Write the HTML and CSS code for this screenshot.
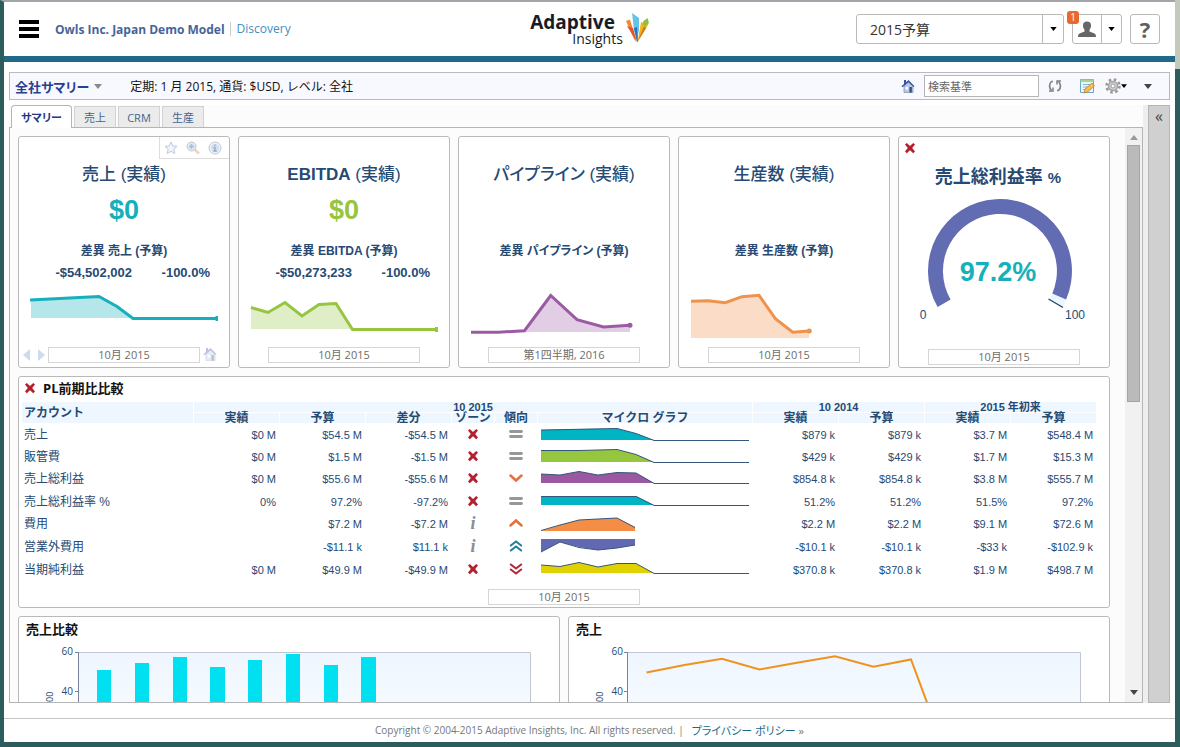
FILE: index.html
```html
<!DOCTYPE html>
<html lang="ja">
<head>
<meta charset="utf-8">
<title>全社サマリー - Adaptive Insights</title>
<link rel="stylesheet" href="styles.css">
</head>
<body>
<svg class="defs" aria-hidden="true">
  <symbol id="cross" viewBox="0 0 12 12"><path d="M1 2.500 2.800 1 6 3.900 9.200 1 11 2.500 8.200 6 11 9.500 9.200 11.200 6 8.200 2.800 11.200 1 9.500 3.800 6z" fill="#b3202f"/></symbol>
  <symbol id="equal" viewBox="0 0 14 12"><path d="M1.500 3.500h11M1.500 8.500h11" stroke="#979797" stroke-width="2.800" stroke-linecap="round"/></symbol>
  <symbol id="down" viewBox="0 0 14 12"><path d="M1.500 3.500 7 8.500 12.500 3.500" fill="none" stroke="#e4703a" stroke-width="2.500" stroke-linecap="round"/></symbol>
  <symbol id="up" viewBox="0 0 14 12"><path d="M1.500 8.500 7 3.500 12.500 8.500" fill="none" stroke="#e4703a" stroke-width="2.500" stroke-linecap="round"/></symbol>
  <symbol id="up2" viewBox="0 0 14 12"><path d="M1.800 5.500 7 1.500 12.200 5.500M1.800 10.500 7 6.500 12.200 10.500" fill="none" stroke="#23809a" stroke-width="2.100" stroke-linecap="round"/></symbol>
  <symbol id="down2" viewBox="0 0 14 12"><path d="M1.800 1.500 7 5.500 12.200 1.500M1.800 6.500 7 10.500 12.200 6.500" fill="none" stroke="#b3283a" stroke-width="2.100" stroke-linecap="round"/></symbol>
  <symbol id="caret" viewBox="0 0 8 5"><path d="M0 0h8L4 5z" fill="currentColor"/></symbol>
  <symbol id="home" viewBox="0 0 14 14"><path d="M3 7v6.500h9V7L7.500 3z" fill="#b9cae0" stroke="#7d8fae" stroke-width=".7"/><path d="M3 1h2v4H3z" fill="#3d55a5"/><path d="M.5 7.300 7.500 1l6 6.300-1 .7-5-4.800L1.500 8.300z" fill="#3c52a3"/><path d="M8.500 8h2.300v5.500H8.500z" fill="#35477f"/><path d="M4.500 8h2.500v2.500H4.500z" fill="#fff"/></symbol>
</svg>
<div class="window">
  <header class="header">
    <button class="menu" aria-label="メニュー"><span></span><span></span><span></span></button>
    <div class="model"><strong>Owls Inc. Japan Demo Model</strong><a href="#">Discovery</a></div>
    <div class="logo">
      <div class="wordmark"><b>Adaptive</b><span>Insights</span></div>
      <svg width="24" height="32" viewBox="0 0 24 32">
        <path d="M1 9 5 7.500 7 14l4 16-2-3z" fill="#ef8a2f"/><path d="M2 14 8 16l4 14z" fill="#e5532c"/><path d="M7 1l7 5v12l-2 10-3-10z" fill="#62c4e8"/><path d="M9 16l3-1 1 15h-1z" fill="#2a72b8"/><path d="M16 10l3 1 4-4v6L12.500 30z" fill="#f0b71f"/><path d="M18 9.500 22.500 6l1.500 5-5 4z" fill="#8fbf3c"/><path d="M18.500 15l3 .5L12.500 30z" fill="#d6781f"/>
      </svg>
    </div>
    <div class="actions">
      <div class="version"><select aria-label="バージョン"><option>2015予算</option></select><span class="arrow"><svg width="7" height="4"><use href="#caret"/></svg></span></div>
      <div class="user">
        <button aria-label="ユーザー"><svg width="18" height="17" viewBox="0 0 18 17"><path d="M5 4.500C5 1.500 6.500 .5 9 .5s4 1 4 4c0 2-.8 3.500-1.500 4.300v1.700l5 2c1 .5 1.500 1.500 1.500 3.500H0c0-2 .5-3 1.500-3.500l5-2V8.800C5.800 8 5 6.500 5 4.500z" fill="#666"/></svg></button>
        <button aria-label="ユーザー メニュー"><svg width="7" height="4"><use href="#caret"/></svg></button>
        <span class="badge">1</span>
      </div>
      <button class="help" aria-label="ヘルプ">?</button>
    </div>
  </header>

  <main class="main">
    <div class="toolbar">
      <button class="page-title">全社サマリー<svg width="8" height="5"><use href="#caret"/></svg></button>
      <span class="context">定期: 1 月 2015, 通貨: $USD, レベル: 全社</span>
      <div class="tools">
        <button aria-label="ホーム"><svg width="14" height="14"><use href="#home"/></svg></button>
        <input class="search" type="text" aria-label="検索基準" placeholder="検索基準">
        <button class="t-refresh" aria-label="更新"><svg width="14" height="14" viewBox="0 0 14 14" fill="none" stroke="#808080" stroke-width="1.700"><path d="M5 2.500H3.500C.8 5 1 9 3.500 11.500M9 11.500h1.500C13.200 9 13 5 10.500 2.500"/><path d="M1 12h4V8.500M13 2H9v3.500" stroke-width="1.500"/></svg></button>
        <button class="t-note" aria-label="編集"><svg width="16" height="16" viewBox="0 0 16 16"><path d="M1.500 1.500h13v13h-13z" fill="#eaf5fb" stroke="#6ea5c8"/><path d="M1.500 1.500h13V4h-13z" fill="#a5d58c"/><path d="M4 6.500h8M4 9h7M4 11.500h4" stroke="#8fb3c9"/><path d="M5 15l1-4 7-6 2.500 3-7 6z" fill="#f2c14b" stroke="#b98532" stroke-width=".8"/></svg></button>
        <button class="t-gear" aria-label="設定"><svg width="16" height="16" viewBox="0 0 16 16"><circle cx="8" cy="8" r="6.500" fill="none" stroke="#999" stroke-width="2.500" stroke-dasharray="2.550 2.550"/><circle cx="8" cy="8" r="4.500" fill="#d2d2d2" stroke="#a2a2a2" stroke-width="1.500"/><circle cx="8" cy="8" r="2" fill="#fff" stroke="#999"/></svg><svg width="6" height="4"><use href="#caret"/></svg></button>
        <button class="t-more" aria-label="その他"><svg width="8" height="5"><use href="#caret"/></svg></button>
      </div>
    </div>

    <div class="workspace">
      <div class="board">
        <nav class="tabs">
          <button class="tab active">サマリー</button><button class="tab">売上</button><button class="tab">CRM</button><button class="tab">生産</button>
        </nav>
        <div class="panel">
          <div class="content">
            <section class="kpis">
              <article class="card kpi">
                <div class="card-tools">
                  <svg width="14" height="14" viewBox="0 0 14 14"><path d="M7 1l1.800 4 4.200.4-3.200 2.800 1 4.300L7 10.300 3.200 12.500l1-4.300L1 5.400 5.200 5z" fill="#f2f5fa" stroke="#bccadd"/></svg>
                  <svg width="14" height="14" viewBox="0 0 14 14"><path d="M8 8l5 4.500" stroke="#eed6b4" stroke-width="2.500"/><circle cx="5.500" cy="5.500" r="4.500" fill="#dfe8f3" stroke="#bccadd"/><path d="M3 5.500h5M5.500 3v5" stroke="#a8bcd6" stroke-width="1.500"/></svg>
                  <svg width="14" height="14" viewBox="0 0 14 14"><circle cx="7" cy="7" r="6" fill="#eef2f8" stroke="#bccadd"/><circle cx="7" cy="7" r="4" fill="#d5e0ee"/><path d="M7 3.500v1.500M5.500 6.500H7V10M5.300 10h3.500" stroke="#93abcb" stroke-width="1.300" fill="none"/></svg>
                </div>
                <h2>売上 (実績)</h2>
                <p class="value teal">$0</p>
                <h3>差異 売上 (予算)</h3>
                <p class="delta"><span>-$54,502,002</span><span>-100.0%</span></p>
                <svg class="spark" viewBox="0 0 188 50"><path d="M1 10 69 7 87 17 103 28H1z" fill="#b5e6ea"/><path d="M0 10 69 6.500 87 16.500 103 28.500H187M187 26v5" fill="none" stroke="#16b0bc" stroke-width="3"/></svg>
                <div class="period"><span class="nav-prev"><svg width="7" height="12" viewBox="0 0 7 12"><path d="M7 0v12L0 6z" fill="#c8d8ee"/></svg><svg width="7" height="12" viewBox="0 0 7 12"><path d="M0 0v12l7-6z" fill="#c8d8ee"/></svg></span><span class="date">10月 2015</span><span class="nav-home"><svg width="14" height="14"><use href="#home"/></svg></span></div>
              </article>
              <article class="card kpi">
                <h2><b>EBITDA</b> (実績)</h2>
                <p class="value green">$0</p>
                <h3>差異 EBITDA (予算)</h3>
                <p class="delta"><span>-$50,273,233</span><span>-100.0%</span></p>
                <svg class="spark" viewBox="0 0 188 50"><path d="M1 18 18 23 35 12 52 26 69 14 86 13 103 39H1z" fill="#dfeec6"/><path d="M1 17.500 18 22.500 35 12.500 52 26 69 14.500 86 13.500 102.500 39.500H186M186.500 37v5" fill="none" stroke="#96c540" stroke-width="3"/></svg>
                <div class="period"><span class="date">10月 2015</span></div>
              </article>
              <article class="card kpi">
                <h2>パイプライン (実績)</h2>
                <p class="value"></p>
                <h3>差異 パイプライン (予算)</h3>
                <p class="delta"></p>
                <svg class="spark" viewBox="0 0 188 50"><path d="M1 42H160V35L134 37 107 30 81 5 55 41z" fill="#e2cee4"/><path d="M1 42.300H28L54.500 40.700 80.700 5.500 107 29.700 133.500 37 160 35.300" fill="none" stroke="#9b5ba3" stroke-width="3"/><circle cx="160" cy="35.300" r="2.500" fill="#9b5ba3"/></svg>
                <div class="period"><span class="date">第1四半期, 2016</span></div>
              </article>
              <article class="card kpi">
                <h2>生産数 (実績)</h2>
                <p class="value"></p>
                <h3>差異 生産数 (予算)</h3>
                <p class="delta"></p>
                <svg class="spark" viewBox="0 0 188 50"><path d="M1 48V11L18 11 35 13 52 7 69 5 86 29 103 42 119 41V48z" fill="#fbdcc6"/><path d="M1 11.300 18.300 10.700 35.300 12.700 52 6.700 69 5.300 85.700 29 102.700 42.300 119.300 41" fill="none" stroke="#ee934f" stroke-width="3"/><circle cx="119.300" cy="41" r="2.500" fill="#ee934f"/></svg>
                <div class="period"><span class="date">10月 2015</span></div>
              </article>
              <article class="card kpi gauge">
                <svg class="alert" width="12" height="12"><use href="#cross"/></svg>
                <h2>売上総利益率 <small>%</small></h2>
                <svg class="dial" viewBox="0 0 192 150">
                  <path d="M158.100 106.500A72 72 0 0 1 154.400 114L141.400 106.500A57 57 0 0 0 144.300 100.500z" fill="#ebf5ff"/>
                  <path d="M29.600 114A72 72 0 1 1 158.100 106.500L144.300 100.500A57 57 0 1 0 42.600 106.500z" fill="#616cb3"/>
                  <path d="M140.500 106 155 114.500" stroke="#1f4068" stroke-width="1.300"/>
                  <text class="dial-value" x="90" y="88">97.2%</text>
                  <text class="dial-end" x="15" y="126">0</text><text class="dial-end" x="167" y="126">100</text>
                </svg>
                <div class="period"><span class="date">10月 2015</span></div>
              </article>
            </section>

            <section class="card pl">
              <h4><svg width="12" height="12"><use href="#cross"/></svg>PL前期比比較</h4>
              <table>
                <colgroup><col class="c-account"><col class="c-num"><col class="c-num"><col class="c-num"><col class="c-icon"><col class="c-icon"><col class="c-graph"><col class="c-num"><col class="c-num"><col class="c-num"><col class="c-num"></colgroup>
                <thead>
                  <tr><th rowspan="2" class="account">アカウント</th><th colspan="6">10 2015</th><th colspan="2">10 2014</th><th colspan="2">2015 年初来</th></tr>
                  <tr><th>実績</th><th>予算</th><th>差分</th><th>ゾーン</th><th>傾向</th><th>マイクロ グラフ</th><th>実績</th><th>予算</th><th>実績</th><th>予算</th></tr>
                </thead>
                <tbody>
                  <tr><th>売上</th><td>$0 M</td><td>$54.5 M</td><td>-$54.5 M</td><td class="ic"><svg width="12" height="12"><use href="#cross"/></svg></td><td class="ic"><svg width="14" height="12"><use href="#equal"/></svg></td><td class="graph"><svg viewBox="0 0 208 20" preserveAspectRatio="none"><path d="M0 5 38 4 76 3.500 95 8.500 113 15H0z" fill="#00b5c3"/><path class="trace" d="M0 5 38 4.300 76 3.500 95 8.500 113 15.500H208"/></svg></td><td>$879 k</td><td>$879 k</td><td>$3.7 M</td><td>$548.4 M</td></tr>
                  <tr><th>販管費</th><td>$0 M</td><td>$1.5 M</td><td>-$1.5 M</td><td class="ic"><svg width="12" height="12"><use href="#cross"/></svg></td><td class="ic"><svg width="14" height="12"><use href="#equal"/></svg></td><td class="graph"><svg viewBox="0 0 208 20" preserveAspectRatio="none"><path d="M0 3.500H38L76 2.500 95 7.500 113 15H0z" fill="#95c63d"/><path class="trace" d="M0 3.500H38L76 2.500 95 7.500 113 15.500H208"/></svg></td><td>$429 k</td><td>$429 k</td><td>$1.7 M</td><td>$15.3 M</td></tr>
                  <tr><th>売上総利益</th><td>$0 M</td><td>$55.6 M</td><td>-$55.6 M</td><td class="ic"><svg width="12" height="12"><use href="#cross"/></svg></td><td class="ic"><svg width="14" height="12"><use href="#down"/></svg></td><td class="graph"><svg viewBox="0 0 208 20" preserveAspectRatio="none"><path d="M0 5 19 6 38 2.500 57 6 76 3.500 95 4 113 14H0z" fill="#9a57a2"/><path class="trace" d="M0 5 19 6 38 2.500 57 6 76 3.500 95 4 113 14.500H208"/></svg></td><td>$854.8 k</td><td>$854.8 k</td><td>$3.8 M</td><td>$555.7 M</td></tr>
                  <tr><th>売上総利益率 %</th><td>0%</td><td>97.2%</td><td>-97.2%</td><td class="ic"><svg width="12" height="12"><use href="#cross"/></svg></td><td class="ic"><svg width="14" height="12"><use href="#equal"/></svg></td><td class="graph"><svg viewBox="0 0 208 20" preserveAspectRatio="none"><path d="M0 4H95L113 13H0z" fill="#00b5c3"/><path class="trace" d="M0 4.500H95L113 13.500H208"/></svg></td><td>51.2%</td><td>51.2%</td><td>51.5%</td><td>97.2%</td></tr>
                  <tr><th>費用</th><td></td><td>$7.2 M</td><td>-$7.2 M</td><td class="ic"><i>i</i></td><td class="ic"><svg width="14" height="12"><use href="#up"/></svg></td><td class="graph"><svg viewBox="0 0 208 20" preserveAspectRatio="none"><path d="M0 17 19 11 38 6 76 4 94 13V17z" fill="#f48e47"/><path class="trace" d="M0 16.500 19 11 38 6 76 4 94 13.500"/></svg></td><td>$2.2 M</td><td>$2.2 M</td><td>$9.1 M</td><td>$72.6 M</td></tr>
                  <tr><th>営業外費用</th><td></td><td>-$11.1 k</td><td>$11.1 k</td><td class="ic"><i>i</i></td><td class="ic"><svg width="14" height="12"><use href="#up2"/></svg></td><td class="graph"><svg viewBox="0 0 208 20" preserveAspectRatio="none"><path d="M0 2H94V8L76 11 57 13 38 10 19 5 0 15z" fill="#6069b2"/><path class="trace" d="M0 15 19 5 38 10.500 57 13 76 11 94 8"/></svg></td><td>-$10.1 k</td><td>-$10.1 k</td><td>-$33 k</td><td>-$102.9 k</td></tr>
                  <tr><th>当期純利益</th><td>$0 M</td><td>$49.9 M</td><td>-$49.9 M</td><td class="ic"><svg width="12" height="12"><use href="#cross"/></svg></td><td class="ic"><svg width="14" height="12"><use href="#down2"/></svg></td><td class="graph"><svg viewBox="0 0 208 20" preserveAspectRatio="none"><path d="M0 5 19 6.500 38 2.500 57 7 76 3.500H95L113 13H0z" fill="#dfd200"/><path class="trace" d="M0 5 19 6.500 38 2.500 57 7 76 3.500H95L113 13.500H208"/></svg></td><td>$370.8 k</td><td>$370.8 k</td><td>$1.9 M</td><td>$498.7 M</td></tr>
                </tbody>
              </table>
              <div class="period"><span class="date">10月 2015</span></div>
            </section>

            <section class="charts">
              <article class="card chart">
                <h4>売上比較</h4>
                <svg viewBox="0 0 540 200">
                  <defs><linearGradient id="sky" x1="0" y1="0" x2="0" y2="1"><stop offset="0" stop-color="#eff6ff"/><stop offset=".5" stop-color="#fafdff"/></linearGradient></defs>
                  <path d="M59.500 12.500h452V200h-452z" fill="url(#sky)" stroke="#c1c7d1"/>
                  <path d="M59.500 200V12.500M56 12.500h4M56 51.500h4" stroke="#76839a" fill="none"/>
                  <path d="M78 30h14v170H78zM116 23h14v177h-14zM154 17h14v183h-14zM191 27h15v173h-15zM229 20h14v180h-14zM267 14h14v186h-14zM305 25h14v175h-14zM342 17h15v183h-15z" fill="#00e0f0"/>
                  <text class="axis" x="54" y="15">60</text><text class="axis" x="54" y="55">40</text>
                  <text class="unit" transform="translate(34 62) rotate(-90)">00</text>
                </svg>
              </article>
              <article class="card chart">
                <h4>売上</h4>
                <svg viewBox="0 0 540 200">
                  <path d="M58.500 12.500h453V200h-453z" fill="url(#sky)" stroke="#c1c7d1"/>
                  <path d="M58.500 200V12.500M55 12.500h4M55 51.500h4" stroke="#76839a" fill="none"/>
                  <path d="M77.500 32.500 115.500 25 153 18.700 190.500 29.500 228 22.700 266 16.200 304.500 26.700 342 19.500 358 62.500 376 112" fill="none" stroke="#f0921e" stroke-width="2"/>
                  <text class="axis" x="54" y="15">60</text><text class="axis" x="54" y="55">40</text>
                  <text class="unit" transform="translate(34 62) rotate(-90)">00</text>
                </svg>
              </article>
            </section>
          </div>
          <div class="scrollbar"><svg class="sc-up" width="8" height="5" viewBox="0 0 8 5"><path d="M0 5h8L4 0z" fill="#999"/></svg><div class="thumb"></div><svg class="sc-down" width="8" height="5"><use href="#caret"/></svg></div>
        </div>
      </div>
      <aside class="drawer"><button aria-label="展開">«</button></aside>
    </div>
  </main>
  <footer class="footer"><span>Copyright © 2004-2015 Adaptive Insights, Inc. All rights reserved. |</span><a href="#">プライバシー ポリシー <span class="raquo">»</span></a></footer>
</div>
</body>
</html>
```
FILE: styles.css
```css
* { box-sizing: border-box; }

body {
  margin: 0;
  font-family: "Open Sans", "Noto Sans CJK JP", sans-serif;
  font-feature-settings: "palt";
  color: #264a73;
  background: linear-gradient(#c3cabc 69px, #2d5c5c 69px);
}
h2, h3, h4, p { margin: 0; }
a { text-decoration: none; }
button {
  font: inherit;
  color: inherit;
  background: none;
  border: 0;
  padding: 0;
  display: flex;
  align-items: center;
  justify-content: center;
}
svg { display: block; }
.defs { position: absolute; width: 0; height: 0; }

.window {
  display: flex;
  flex-direction: column;
  height: 100vh;
  border: solid #2d5c5c;
  border-width: 2px 0 5px 4px;
  border-top-color: #a2a6ab;
  margin-right: 5px;
  background: #fff;
}

/* Header */
.header {
  flex: none;
  display: grid;
  grid-template-columns: 1fr auto 1fr;
  align-items: center;
  height: 60px;
  border-bottom: 6px solid #1f6a8a;
  padding: 0 15px;
}
.model { grid-area: 1 / 1; }
.menu { grid-area: 1 / 1; justify-self: start; flex-direction: column; gap: 3px; }
.menu span { width: 20px; height: 4px; background: #000; }
.model { display: flex; align-items: center; font-size: 12px; margin-left: 36px; color: #45659a; white-space: nowrap; }
.model a { color: #4390c0; border-left: 1px solid #ccc; padding-left: 6px; margin-left: 5px; line-height: 14px; }
.logo { grid-area: 1 / 2; display: flex; gap: 2px; color: #161d27; }
.wordmark { display: flex; flex-direction: column; align-items: flex-end; }
.wordmark b { font-size: 19px; line-height: 20px; padding-right: 8px; }
.wordmark span { font-size: 14px; line-height: 14px; }
.actions { grid-area: 1 / 3; display: flex; justify-content: flex-end; gap: 8px; }
.version, .user, .help { height: 30px; border: 1px solid #b9b9b9; border-radius: 3px; background: #fff; }
.version { display: flex; position: relative; width: 208px; }
.version select {
  appearance: none;
  width: 100%;
  border: 0;
  background: none;
  padding: 0 30px 0 13px;
  font: 14px "Open Sans", "Noto Sans CJK JP", sans-serif;
  color: #333;
}
.arrow {
  position: absolute;
  right: 0;
  top: 0;
  bottom: 0;
  width: 21px;
  border-left: 1px solid #b9b9b9;
  display: flex;
  align-items: center;
  justify-content: center;
  color: #000;
  pointer-events: none;
}
.user { display: flex; position: relative; color: #000; }
.user button { width: 28px; }
.user button + button { width: 20px; border-left: 1px solid #b9b9b9; }
.badge {
  position: absolute;
  left: -6px;
  top: -4px;
  width: 12px;
  height: 13px;
  border-radius: 3px;
  background: #e8692b;
  color: #fff;
  font-size: 10px;
  line-height: 13px;
  text-align: center;
}
.help { width: 30px; font: bold 22px "Open Sans", sans-serif; color: #5f5f5f; }

/* Toolbar */
.main { flex: 1; min-height: 0; display: flex; flex-direction: column; padding: 10px 5px 15px; }
.toolbar {
  flex: none;
  display: flex;
  align-items: center;
  height: 28px;
  margin-bottom: 5px;
  border: 1px solid #b9bac4;
  background: #f8f9ff;
  padding: 0 17px 0 5px;
}
.page-title { font-size: 13px; font-weight: bold; color: #2b3f8f; gap: 5px; }
.page-title svg { color: #8a8a8a; }
.context { font-size: 12px; font-feature-settings: normal; color: #111; margin-left: 28px; }
.tools { display: flex; align-items: center; margin-left: auto; color: #444; }
.search {
  width: 115px;
  height: 22px;
  margin-left: 9px;
  border: 1px solid #b5b5b5;
  padding: 0 3px;
  font: 11px "Open Sans", "Noto Sans CJK JP", sans-serif;
}
.search::placeholder { color: #666; }
.t-refresh { margin-left: 9px; }
.t-note { margin-left: 17px; }
.t-gear { margin-left: 10px; color: #000; }
.t-more { margin-left: 17px; }

/* Board */
.workspace { flex: 1; min-height: 0; display: flex; gap: 5px; background: #eee; }
.board { flex: 1; min-width: 0; display: flex; flex-direction: column; background: #fcfcfc; }
.tabs { flex: none; display: flex; align-items: flex-end; gap: 2px; height: 22px; padding-left: 2px; }
.tab {
  min-width: 42px;
  height: 21px;
  border: 1px solid #d2d2d2;
  border-bottom: 0;
  background: #ebebeb;
  font-size: 11px;
  color: #44658f;
}
.tab.active {
  position: relative;
  width: 61px;
  height: 23px;
  margin-bottom: -1px;
  border-color: #b5b5b5;
  border-radius: 4px 4px 0 0;
  background: #fff;
  color: #1f3a80;
  font-weight: bold;
}
.panel { flex: 1; min-height: 0; display: flex; border: 1px solid #b5b5b5; overflow: hidden; }
.content { flex: 1; min-width: 0; overflow: hidden; display: flex; flex-direction: column; gap: 8px; padding: 8px 15px 8px 8px; }
.scrollbar { width: 17px; background: #f1f1f1; display: flex; flex-direction: column; align-items: center; padding: 7px 0; }
.thumb { width: 13px; height: 257px; margin-top: 5px; background: #bababa; border: 1px solid #a5a5a5; }
.sc-down { margin-top: auto; color: #444; }
.drawer { width: 22px; background: #d0d0d0; border: 1px solid #b5b5b5; }
.drawer button { width: 100%; height: 20px; font-size: 16px; color: #444; }

/* Cards */
.card { flex: none; position: relative; background: #fff; border: 1px solid #b9b9b9; border-radius: 3px; }
.kpis { flex: none; display: grid; grid-template-columns: repeat(5, 1fr); gap: 8px; }
.kpi { height: 232px; text-align: center; font-family: "Liberation Sans", "Noto Sans CJK JP", sans-serif; }
.kpi h2 { font-size: 17px; line-height: 26px; font-weight: 500; margin-top: 25px; }
.value { height: 32px; line-height: 32px; font-size: 27px; font-weight: bold; margin-top: 6px; }
.teal { color: #16b0bc; }
.green { color: #96c540; }
.kpi h3 { font-size: 12px; line-height: 18px; margin-top: 16px; }
.delta {
  display: grid;
  grid-template-columns: 1fr 78px;
  height: 18px;
  line-height: 18px;
  margin-top: 4px;
  padding-right: 19px;
  text-align: right;
  font-size: 13px;
  font-weight: bold;
}
.spark { width: 188px; height: 50px; margin: 8px 11px 7px; }
.period { display: flex; justify-content: center; position: relative; }
.date {
  width: 152px;
  height: 16px;
  border: 1px solid #d6d6d6;
  background: #fff;
  color: #6d6d6d;
  font: 11px/14px "Open Sans", "Noto Sans CJK JP", sans-serif;
  text-align: center;
}
.nav-prev, .nav-home { position: absolute; top: 2px; opacity: .9; }
.nav-prev { left: 4px; display: flex; gap: 8px; }
.nav-home { right: 12px; top: 0; opacity: .35; }
.card-tools {
  position: absolute;
  top: 0;
  right: 0;
  display: flex;
  gap: 8px;
  padding: 4px 7px 3px 4px;
  border: 1px solid #ddd;
  border-width: 0 0 1px 1px;
}
.alert { position: absolute; left: 5px; top: 5px; }
.gauge h2 { font-size: 18px; font-weight: bold; margin-top: 27px; padding-right: 12px; }
.gauge small { font-size: 15px; }
.dial { width: 192px; height: 150px; margin: 2px auto 6px; }
.dial text { text-anchor: middle; }
.dial-value { font-size: 27px; font-weight: bold; fill: #16b0bc; }
.dial-end { font-size: 12px; fill: #264a73; }

/* Comparison table */
.card h4 { display: flex; align-items: center; font-size: 13px; line-height: 20px; color: #111; }
.pl { height: 232px; }
.card.pl h4 { gap: 7px; padding: 1px 5px 3px; }
.pl table {
  table-layout: fixed;
  width: calc(100% - 14px);
  margin: 0 12px 8px 2px;
  border-spacing: 1px;
  font: 11px "Liberation Sans", "Noto Sans CJK JP", sans-serif;
}
.c-account { width: 171px; }
.c-num { width: 85px; }
.c-icon { width: 42px; }
.c-graph { width: 214px; }
.pl th, .pl td { padding: 0; }
.pl thead th { height: 10px; line-height: 10px; background: #eef7ff; white-space: nowrap; }
.pl thead tr + tr th { font-size: 12px; }
.pl thead .account { font-size: 12px; text-align: left; padding-left: 2px; }
.pl tbody th { font-size: 12px; font-weight: normal; text-align: left; padding-left: 2px; }
.pl tbody th, .pl tbody td { height: 21px; line-height: 20px; white-space: nowrap; }
.pl tbody tr:nth-child(3n) td { height: 22px; }
.pl tbody td { text-align: right; padding-right: 3px; }
.pl tbody .ic { text-align: center; padding: 0; }
.ic svg { display: inline-block; vertical-align: -1px; }
.ic i { font: italic bold 18px/20px "Liberation Serif", serif; color: #8c8c8c; }
.pl tbody .graph { padding: 0 3px; }
.graph svg { width: 100%; height: 20px; }
.trace { fill: none; stroke: #35567c; vector-effect: non-scaling-stroke; }

/* Charts */
.charts { flex: none; display: grid; grid-template-columns: 1fr 1fr; gap: 8px; }
.chart h4 { padding: 2px 7px 1px; }
.chart svg { width: 100%; }
.axis { font-size: 10px; text-anchor: end; fill: #264a73; }
.unit { font-size: 9px; fill: #264a73; }

/* Footer */
.footer {
  flex: none;
  display: flex;
  justify-content: center;
  gap: 8px;
  height: 24px;
  line-height: 23px;
  border-top: 1px solid #c4c4c4;
  font-size: 10px;
  color: #777;
}
.footer a { font-size: 11px; color: #1c6a86; }
.raquo { color: #777; }
```
